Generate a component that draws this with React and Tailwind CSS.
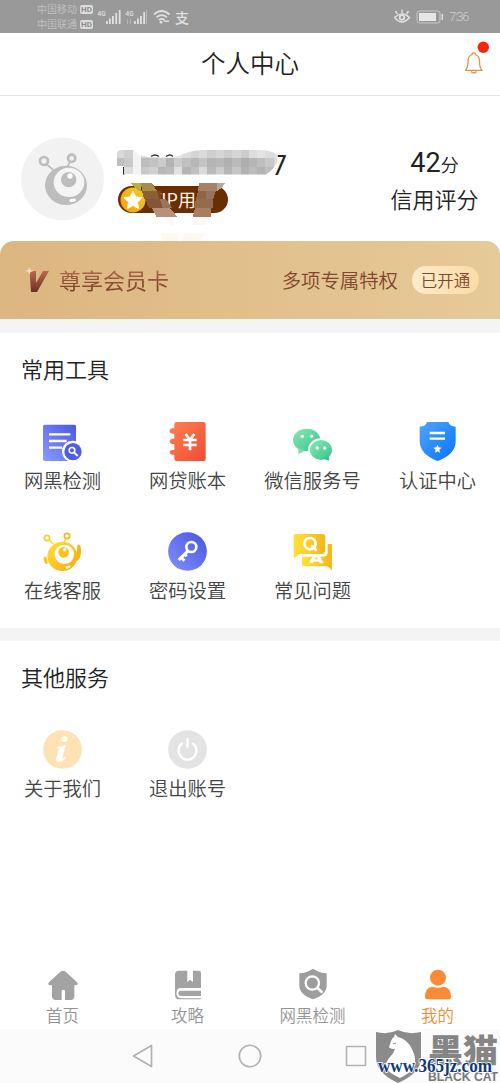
import React from 'react';

const BLOCKS_TOP = ['#d9d9d9', '#cfcfcf', '#f3f3f3', '#d2d2d2', '#e4e4e4', '#e9e9e9', '#ededed', '#e6e6e6', '#dcdcdc', '#d4d4d4', '#dadada', '#cfcfcf', '#d6d6d6', '#cdcdcd', '#d6d6d6', '#cccccc', '#dedede', '#e4e4e4', '#dddddd', '#e2e2e2'];
const BLOCKS_MID = ['#bfbfbf', '#c9c9c9', '#f3f3f3', '#bdbdbd', '#c2c2c2', '#cbcbcb', '#b3b3b3', '#cccccc', '#c0c0c0', '#b7b7b7', '#c4c4c4', '#b5b5b5', '#b9b9b9', '#b0b0b0', '#bababa', '#aeaeae', '#b6b6b6', '#bebebe', '#c8c8c8', '#d8d8d8'];
const BLOCKS_LOW = ['#ffffff', '#dddddd', '#f3f3f3', '#c8c8c8', '#d0d0d0', '#b8b8b8', '#bcbcbc', '#e0e0e0', '#b4b4b4', '#c0c0c0', '#dadada', '#bababa', '#cccccc', '#b6b6b6', '#c6c6c6', '#b2b2b2', '#bcbcbc', '#b4b4b4', '#bfbfbf', '#e0e0e0'];

function StatusBar() {
  return (
    <div className="h-[33px] bg-[#999] flex items-center pl-[37px] pr-[32px]">
      <div className="flex flex-col gap-[3px] w-[57px]">
        {['中国移动', '中国联通'].map((name) => (
          <div key={name} className="flex items-center gap-[2px] h-[12px]">
            <span className="text-[10px] leading-none text-[#c2c2c2] w-[41px] whitespace-nowrap">{name}</span>
            <span className="w-[13px] h-[9px] rounded-[2px] bg-[#dcdcdc] text-[#8c8c8c] text-[8px] leading-[9px] font-bold text-center font-['Roboto']">HD</span>
          </div>
        ))}
      </div>
      {/* signal bars and wifi */}
      <svg className="ml-[3px] w-[76px] h-[18px]" viewBox="97 8 76 18" fill="#e0e0e0">
        <text x="97.500" y="16" fontSize="7.500" fontWeight="500" fontFamily="Roboto" textLength="8" lengthAdjust="spacingAndGlyphs">4G</text>
        <text x="125.500" y="16" fontSize="7.500" fontWeight="500" fontFamily="Roboto" textLength="8" lengthAdjust="spacingAndGlyphs">4G</text>
        <path d="M106 21h1.800v3H106zM109 18.500h1.800v5.500h-1.800zM112 16h1.800v8h-1.800zM115.300 13h1.800v11h-1.800zM118.800 10h1.800v14h-1.800z" />
        <path d="M134 21h1.800v3H134zM137 18.500h1.800v5.500h-1.800zM140 16h1.800v8h-1.800zM143.300 12h1.800v12h-1.800z" />
        <path d="M146 10h1v14h-1z" fill="#b8b8b8" />
        <path d="M127 19h1v5h-1zM130 19h1v5h-1z" fill="#b5b5b5" />
        <g fill="none" stroke="#e0e0e0" strokeWidth="1.700">
          <path d="M154 14.500q7.500-7 15.500 0M156.500 17.300q5.200-4.500 10.500 0M159 20q2.800-2.300 5.500 0" />
        </g>
        <circle cx="161" cy="22.200" r="1.400" />
        <path d="M164 20.500h5v1.500h-5z" />
      </svg>
      <span className="ml-[2px] text-[14px] leading-[18px] font-medium text-[#e0e0e0]">支</span>
      <div className="flex-1" />
      <svg className="w-[50px] h-[16px]" viewBox="394 9 50 16" fill="none" stroke="#e0e0e0">
        <path d="M394.500 17.500q7.500-7 15 0q-7.500 9-15 0z" strokeWidth="1.500" />
        <circle cx="402" cy="17.500" r="2.300" strokeWidth="1.800" />
        <path d="M402 13V9.500M397.500 14l-2-3M406.500 14l2-3" strokeWidth="1.400" />
        <rect x="417" y="11" width="23" height="12" rx="2.500" stroke="#c8c8c8" />
        <rect x="419" y="13" width="17" height="8" fill="#e6e6e6" stroke="none" />
        <path d="M442.300 14v6" strokeWidth="1.500" />
      </svg>
      <span className="ml-[5px] w-[19px] text-[13px] font-light tracking-[-1.300px] text-[#cfcfcf] font-['Roboto'] whitespace-nowrap">7:36</span>
    </div>
  );
}

function Header() {
  return (
    <div className="relative h-[63px] border-b border-[#e2e2e2] flex items-center justify-center">
      <h1 className="-mt-[2px] text-[24.500px] leading-none text-[#222]">个人中心</h1>
      <svg className="absolute left-[464px] top-[7px] w-[27px] h-[36px]" viewBox="464 40 27 36">
        <path d="M465.500 70.300c2.300-2.300 2.500-4 2.500-9 0-4 2.200-6 4-6.800 0-2.200 3.500-2.200 3.500 0 1.800.8 4 2.800 4 6.800 0 5 .2 6.700 2.500 9z" fill="none" stroke="#d9944a" strokeWidth="1.300" strokeLinejoin="round" />
        <path d="M471 71.500q2.700 3 5.500 0" fill="none" stroke="#d9944a" strokeWidth="1.300" />
        <circle cx="483.300" cy="47.200" r="5.700" fill="#f5260f" />
      </svg>
    </div>
  );
}

function Mosaic() {
  return (
    <svg className="absolute left-[115px] top-[49px] w-[175px] h-[102px]" viewBox="115 145 175 102">
      <defs>
        <clipPath id="smear">
          <path d="M117 153q1-3 4-3h11q3 0 6 4 3 3 12 3h22q8-1 14-4 8-3 20-3h56q16 2 16 6-1 12-12 18.500H134V174h-10v-8h-7z" />
        </clipPath>
      </defs>
      <path d="M123 167h1.500v7.500H123z" fill="#222" />
      <g clipPath="url(#smear)" shapeRendering="crispEdges">
        {[BLOCKS_TOP, BLOCKS_MID, BLOCKS_LOW].map((row, r) =>
          row.map((fill, c) => (
            <rect key={r + '-' + c} x={116 + c * 8.3} y={149.5 + r * 8.5} width="8.500" height="8.600" fill={fill} />
          ))
        )}
      </g>
      <path d="M151 156.500q4-3 8 0M166 156.500q4-3 7 0" fill="none" stroke="#333" strokeWidth="1.300" />
      {/* smears across the badge */}
      <g shapeRendering="crispEdges">
        <path d="M131 183h10v8h-3z" fill="#b8ae45" />
        <path d="M141 183h11l5 8h-15z" fill="#a98a4c" />
        <path d="M142 191h15l3 8h-16z" fill="#8b6034" />
        <path d="M145 199h17l3 9h-16z" fill="#835637" />
        <path d="M152 208h18l7 8.500h-21z" fill="#b69078" />
        <path d="M157 191h4v8h-2z" fill="#7a4720" />
        <path d="M160 199h6l6 9h-9z" fill="#9b7458" />
        <path d="M199 183h18v8h-19z" fill="#a68269" />
        <path d="M217 183h8l-3 5-5 3z" fill="#baa797" />
        <path d="M198 191h8v8h-10z" fill="#8e6549" />
        <path d="M206 191h10l-3 8h-7z" fill="#99745c" />
        <path d="M196 199h17v9h-19z" fill="#956b4e" />
        <path d="M195 208h16v8.500h-18z" fill="#a87d63" />
        <path d="M166 217h8v8h-3zM195 217h15l-4 8h-14z" fill="#faf8f6" />
        <path d="M162 233h16v8h-16zM183 233h22l-5 8h-17z" fill="#fdf8f1" />
      </g>
    </svg>
  );
}

function Profile() {
  return (
    <div className="relative h-[145px] pl-[21px] pr-[21px] flex">
      <svg className="mt-[41px] w-[83px] h-[84px] shrink-0" viewBox="0 0 249 252">
        <circle cx="124.500" cy="126" r="124.500" fill="#f2f2f2" />
        <g fill="none" stroke="#bdbdbd">
          <circle cx="69" cy="72" r="12" strokeWidth="8" />
          <circle cx="152" cy="64" r="11" strokeWidth="8" />
          <path d="M77 82l20 17M147 75l-9 16" strokeWidth="5" />
        </g>
        <ellipse cx="135" cy="145" rx="63" ry="59" fill="#bdbdbd" />
        <ellipse cx="144" cy="136" rx="46" ry="44" fill="#f5f5f5" />
        <circle cx="143" cy="128" r="23" fill="#bdbdbd" />
        <circle cx="147" cy="117" r="8" fill="#fff" />
        <ellipse cx="155" cy="190" rx="10" ry="5" fill="#fff" transform="rotate(-8 155 190)" />
      </svg>
      <div className="ml-[14px] pt-[54px] w-[173px]">
        <div className="h-[32px] text-right text-[27px] leading-[32px] font-normal text-[#222] font-['Roboto'] pr-[4px]">7</div>
        <div className="mt-[4px] w-[110px] h-[27px] rounded-full bg-[#692f02] flex items-center">
          <svg className="ml-[2px] w-[26px] h-[26px]" viewBox="0 0 26 26">
            <defs>
              <linearGradient id="coin" x1="1" y1="0" x2="0" y2="1">
                <stop offset="0" stopColor="#f3cf24" />
                <stop offset="1" stopColor="#f79b0b" />
              </linearGradient>
            </defs>
            <circle cx="13" cy="13" r="12.500" fill="url(#coin)" />
            <path d="M13 4l2.800 5.900 6.400.8-4.700 4.500 1.200 6.500L13 18.500l-5.700 3.200 1.200-6.500-4.700-4.500 6.400-.8z" fill="#fffdf0" stroke="#fffdf0" strokeLinejoin="round" />
          </svg>
          <span className="-mt-[2px] ml-[5px] text-[18px] leading-none font-normal text-[#fff5e8]">VIP用</span>
        </div>
      </div>
      <div className="ml-auto pt-[50px] w-[89px] text-[#222] text-center">
        <div className="h-[34px] leading-[34px] whitespace-nowrap">
          <span className="text-[27px] font-normal font-['Roboto']">42</span>
          <span className="text-[18px]">分</span>
        </div>
        <div className="mt-[7px] text-[22px] leading-[22px] whitespace-nowrap">信用评分</div>
      </div>
      <Mosaic />
    </div>
  );
}

function MemberCard() {
  return (
    <div className="h-[78px] rounded-t-[14px] bg-linear-to-r from-[#dcb680] to-[#e6ca98] flex items-center pl-[25px] pr-[21px] text-[#80472f]">
      <svg className="w-[25px] h-[26px]" viewBox="25 266 25 26">
        <defs>
          <linearGradient id="vee" x1="0" y1="0" x2="0" y2="1">
            <stop offset="0" stopColor="#b56a50" />
            <stop offset="1" stopColor="#6f2f25" />
          </linearGradient>
        </defs>
        <path d="M29.500 270h6.500v12l7-12h6l-12 21h-6z" fill="url(#vee)" />
        <path d="M25 270l3-1 1.500-3 1 3 3 1-3 1-1 3-1-3z" fill="#f6ddc4" />
      </svg>
      <span className="-mt-[2px] ml-[9px] text-[22px] leading-[32px] font-normal bg-linear-to-b from-[#b87255] to-[#743a25] bg-clip-text text-transparent">尊享会员卡</span>
      <span className="-mt-[1px] ml-auto text-[19.400px] leading-none">多项专属特权</span>
      <span className="ml-[14px] w-[67px] h-[28px] rounded-full bg-linear-to-r from-[#fcebcb] to-[#fbdca6] text-[16.500px] leading-[29px] text-center">已开通</span>
    </div>
  );
}

function ReportIcon() {
  return (
    <svg className="w-[39px] h-[39px]" viewBox="0 0 117 117">
      <defs>
        <linearGradient id="blue" x1="0" y1="1" x2="1" y2="0">
          <stop offset="0" stopColor="#8a9bff" />
          <stop offset="1" stopColor="#4a57e2" />
        </linearGradient>
      </defs>
      <rect y="8" width="99" height="109" rx="5" fill="url(#blue)" />
      <path d="M18 37h64M18 57h53M18 77h39" stroke="#fff" strokeWidth="7" />
      <circle cx="89" cy="88" r="32" fill="#fff" />
      <circle cx="90" cy="89" r="26" fill="#4f5ce4" />
      <circle cx="87" cy="85" r="8.500" fill="none" stroke="#fff" strokeWidth="4.500" />
      <path d="M93 91l11 11" stroke="#fff" strokeWidth="6" />
    </svg>
  );
}

function LedgerIcon() {
  return (
    <svg className="w-[39px] h-[39px]" viewBox="0 0 117 117">
      <defs>
        <linearGradient id="red" x1="0" y1="0" x2="1" y2="1">
          <stop offset="0" stopColor="#ff8150" />
          <stop offset="1" stopColor="#f04a36" />
        </linearGradient>
      </defs>
      <path d="M26 0h80q7 0 7 7v103q0 7-7 7H26q-7 0-7-7v-12h-5q-9 0-9-7t9-7h5V66h-5q-9 0-9-8t9-8h5V35h-5q-9 0-9-8t9-8h5V7q0-7 7-7z" fill="url(#red)" />
      <path d="M53 36l13 18 13-18M66 54v31M46 54h40M46 69h40" fill="none" stroke="#fff" strokeWidth="8" />
    </svg>
  );
}

function WechatIcon() {
  return (
    <svg className="w-[39px] h-[39px]" viewBox="0 0 117 117">
      <defs>
        <linearGradient id="green" x1="0" y1="0" x2="1" y2="1">
          <stop offset="0" stopColor="#8be8b3" />
          <stop offset="1" stopColor="#35c48a" />
        </linearGradient>
      </defs>
      <ellipse cx="41" cy="54" rx="41" ry="34" fill="url(#green)" />
      <path d="M14 76l3 20 18-10z" fill="#7be0ad" />
      <circle cx="28" cy="43" r="5" fill="#fff" />
      <circle cx="56" cy="43" r="5" fill="#fff" />
      <ellipse cx="83" cy="84" rx="38" ry="35" fill="#fff" />
      <ellipse cx="84" cy="84" rx="33" ry="30" fill="url(#green)" />
      <path d="M90 110l19 6-3-17z" fill="#35c48a" />
      <circle cx="73" cy="78" r="5" fill="#fff" />
      <circle cx="95" cy="78" r="5" fill="#fff" />
    </svg>
  );
}

function ShieldIcon() {
  return (
    <svg className="w-[39px] h-[39px]" viewBox="0 0 117 117">
      <defs>
        <linearGradient id="azure" x1="0" y1="0" x2="1" y2="1">
          <stop offset="0" stopColor="#50a5f8" />
          <stop offset="1" stopColor="#0872fb" />
        </linearGradient>
      </defs>
      <path d="M27 0h64q4 14 22 14v43q0 40-54 60Q5 97 5 57V14Q23 14 27 0z" fill="url(#azure)" />
      <path d="M35 33h46M35 50h46" stroke="#fff" strokeWidth="7" />
      <path d="M58.500 68l3.500 8 9 1-7 6 2 9-7.500-4.500L51 92l2-9-7-6 9-1z" fill="#fff" />
    </svg>
  );
}

function RobotIcon() {
  return (
    <svg className="w-[39px] h-[39px]" viewBox="0 0 117 117">
      <defs>
        <linearGradient id="gold" x1="0" y1="0" x2="1" y2="1">
          <stop offset="0" stopColor="#ffe23c" />
          <stop offset="1" stopColor="#f9a910" />
        </linearGradient>
      </defs>
      <g fill="none" stroke="#f7cf2b">
        <circle cx="12" cy="18" r="8" strokeWidth="5" />
        <circle cx="72" cy="12" r="8" strokeWidth="5" stroke="#f5b91d" />
        <path d="M18 24l13 12M69 20l-7 13" strokeWidth="4" />
      </g>
      <ellipse cx="8" cy="85" rx="5" ry="12" fill="#fbc41c" transform="rotate(-15 8 85)" />
      <path d="M104 38q11-2 10 22-2 26-16 28 5-22 5-48z" fill="#f6b416" />
      <ellipse cx="58" cy="73" rx="45" ry="44" fill="url(#gold)" />
      <ellipse cx="64" cy="67" rx="29" ry="29" fill="#fff" />
      <circle cx="62" cy="61" r="16" fill="#fac11b" />
      <circle cx="65" cy="53" r="5" fill="#fff" />
      <ellipse cx="75" cy="105" rx="8" ry="3.500" fill="#fff" transform="rotate(-15 75 105)" />
    </svg>
  );
}

function KeyIcon() {
  return (
    <svg className="w-[39px] h-[39px]" viewBox="0 0 117 117">
      <defs>
        <linearGradient id="indigo" x1="0" y1="1" x2="1" y2="0">
          <stop offset="0" stopColor="#8290ff" />
          <stop offset="1" stopColor="#4755e2" />
        </linearGradient>
      </defs>
      <circle cx="58.500" cy="58.500" r="58" fill="url(#indigo)" />
      <circle cx="70" cy="45" r="15" fill="none" stroke="#fff" strokeWidth="8" />
      <path d="M61 56L32 84M39 75l10 11M50 65l6 8" stroke="#fff" strokeWidth="9" />
    </svg>
  );
}

function FaqIcon() {
  return (
    <svg className="w-[39px] h-[39px]" viewBox="0 0 117 117">
      <defs>
        <linearGradient id="amber" x1="0" y1="0" x2="1" y2="0">
          <stop offset="0" stopColor="#ffe13a" />
          <stop offset="1" stopColor="#f3b81a" />
        </linearGradient>
      </defs>
      <path d="M104 36h13v78L103 103H32q-5 0-5-6V74h64q13 0 13-14z" fill="url(#amber)" />
      <path d="M8 6h80q9 0 9 9v38q0 12-11 13H20L2 79V12q0-6 6-6z" fill="url(#amber)" />
      <circle cx="51" cy="35" r="17" fill="none" stroke="#fff" strokeWidth="8" />
      <path d="M54 40l17 16" stroke="#fff" strokeWidth="8" />
      <path d="M48 94l14-27h16l14 27H81l-3-5H62l-3 5z" fill="#fff" />
      <path d="M70 74l4 8h-8z" fill="#f9c825" />
    </svg>
  );
}

function InfoIcon() {
  return (
    <svg className="w-[39px] h-[39px]" viewBox="0 0 117 117">
      <circle cx="58.500" cy="58.500" r="58" fill="#fde3b4" />
      <circle cx="64" cy="28" r="9" fill="#fff" />
      <path d="M43 51q13 0 24-5l-11 39q1 4 10-4l2 3Q58 96 46 95q-8-2-5-11l8-28q-1-3-7-2z" fill="#fff" stroke="#fff" strokeWidth="2" />
    </svg>
  );
}

function PowerIcon() {
  return (
    <svg className="w-[39px] h-[39px]" viewBox="0 0 117 117">
      <circle cx="58.500" cy="58.500" r="58" fill="#e3e3e3" />
      <path d="M44 39a27 27 0 1 0 29 0M58.500 25v28" fill="none" stroke="#fff" strokeWidth="7" />
    </svg>
  );
}

function Tool({ icon, label }) {
  return (
    <div className="flex flex-col items-center h-[110px]">
      {icon}
      <span className="mt-[7px] text-[19.300px] leading-[24px] text-[#444] whitespace-nowrap">{label}</span>
    </div>
  );
}

function Tab({ icon, label, active }) {
  return (
    <div className="flex flex-col items-center">
      {icon}
      <span className={`text-[16.500px] leading-[20px] ${active ? 'text-[#f78a35]' : 'text-[#949494]'}`}>{label}</span>
    </div>
  );
}

function TabBar() {
  return (
    <div className="grid grid-cols-4 h-[61px]">
      <Tab
        label="首页"
        icon={
          <svg className="w-[30px] h-[37px]" viewBox="0 0 90 111">
            <path d="M37 11q8-6 16 0l34 32q6 8-3 9h-5v33q0 11-11 11H51V70q0-4-3-4h-4q-3 0-3 4v26H24q-12 0-12-11V52H6q-9-1-3-9z" fill="#a3a3a3" />
          </svg>
        }
      />
      <Tab
        label="攻略"
        icon={
          <svg className="w-[30px] h-[37px]" viewBox="0 0 90 111">
            <path d="M18 8h25v34l8-7 9 7V8h17q7 0 7 6v46H23q-12 0-12 14 0 11 10 14h63v6H20Q6 94 6 80V20Q6 8 18 8z" fill="#a3a3a3" />
            <path d="M84 68H24q-8 0-8 8t8 8h60z" fill="#a3a3a3" />
            <path d="M84 64H24q-11 0-11 12t11 12h60" fill="none" stroke="#fff" strokeWidth="5" />
          </svg>
        }
      />
      <Tab
        label="网黑检测"
        icon={
          <svg className="w-[30px] h-[37px]" viewBox="0 0 90 111">
            <path d="M45 2q18 12 41 14v36q0 29-41 42Q4 81 4 52V16Q27 14 45 2z" fill="#9d9d9d" />
            <circle cx="43" cy="45" r="20" fill="none" stroke="#fff" strokeWidth="7" />
            <path d="M56 57l17 17" stroke="#fff" strokeWidth="8" />
          </svg>
        }
      />
      <Tab
        active
        label="我的"
        icon={
          <svg className="w-[30px] h-[37px]" viewBox="0 0 90 111">
            <circle cx="45" cy="29" r="24" fill="#fb8a38" />
            <path d="M6 88q0-30 22-32 17 6 34 0 22 2 22 32 0 6-6 6H12q-6 0-6-6z" fill="#fb8a38" />
          </svg>
        }
      />
    </div>
  );
}

function Watermark() {
  return (
    <div className="absolute left-[374px] bottom-0 w-[126px] h-[54px]">
      <svg className="w-[126px] h-[54px] overflow-visible" viewBox="374 1029 126 54">
        <path d="M398 1030q10 5 23 2v25q0 16-23 26-22-10-22-26v-25q12 3 22-2z" fill="#8b8b8b" />
        <path d="M385 1068q1-7 5-11 4-4 5-8-5 0-6-2 1-3 2-6 1-3 3-4l1-3 3 3q9 2 14 12 5 10 2 19-4 5-14 10-9-4-15-10z" fill="#fff" />
        <path d="M393 1044l3-1" stroke="#8b8b8b" />
        <text x="428" y="1062" fontFamily="Noto Sans CJK SC" fontWeight="900" fontSize="32" textLength="70" lengthAdjust="spacingAndGlyphs" fill="#858585">黑猫</text>
        <text x="428" y="1081" fontFamily="Liberation Sans" fontWeight="700" fontSize="12.500" textLength="70" lengthAdjust="spacingAndGlyphs" fill="#777">BLACK CAT</text>
        <text x="378" y="1072" fontFamily="Liberation Serif" fontWeight="700" fontSize="18" textLength="114" lengthAdjust="spacingAndGlyphs" fill="#123a78" stroke="#fff" strokeWidth="1.500" paintOrder="stroke">www.365jz.com</text>
      </svg>
    </div>
  );
}

function SystemNav() {
  return (
    <div className="relative h-[54px] bg-[#fbfbfb]">
      <div className="flex justify-between items-center h-full pl-[132px] pr-[133px]">
        <svg className="w-[22px] h-[24px]" viewBox="0 0 22 24" fill="none" stroke="#b2b2b2" strokeWidth="1.700" strokeLinejoin="round">
          <path d="M19.500 1.500v21L1.500 12z" />
        </svg>
        <svg className="w-[24px] h-[24px]" viewBox="0 0 24 24" fill="none" stroke="#b2b2b2" strokeWidth="1.600">
          <circle cx="12" cy="12" r="10.700" />
        </svg>
        <svg className="w-[22px] h-[22px]" viewBox="0 0 22 22" fill="none" stroke="#b2b2b2" strokeWidth="1.600">
          <rect x="1.500" y="1.500" width="19" height="19" rx="0.500" />
        </svg>
      </div>
      <Watermark />
    </div>
  );
}

export default function App() {
  return (
    <div className="w-[500px] h-[1083px] bg-white overflow-hidden flex flex-col font-[350] font-['Noto_Sans_CJK_SC',sans-serif]">
      <StatusBar />
      <Header />
      <Profile />
      <MemberCard />
      <div className="h-[14px] bg-[#f4f4f4]" />
      <section className="h-[295px]">
        <h2 className="pt-[23px] pl-[21px] text-[22px] leading-[24px] text-[#222]">常用工具</h2>
        <div className="mt-[42px] grid grid-cols-4">
          <Tool icon={<ReportIcon />} label="网黑检测" />
          <Tool icon={<LedgerIcon />} label="网贷账本" />
          <Tool icon={<WechatIcon />} label="微信服务号" />
          <Tool icon={<ShieldIcon />} label="认证中心" />
          <Tool icon={<RobotIcon />} label="在线客服" />
          <Tool icon={<KeyIcon />} label="密码设置" />
          <Tool icon={<FaqIcon />} label="常见问题" />
        </div>
      </section>
      <div className="h-[13px] bg-[#f4f4f4]" />
      <section className="flex-1">
        <h2 className="pt-[23px] pl-[21px] text-[22px] leading-[24px] text-[#222]">其他服务</h2>
        <div className="mt-[42px] grid grid-cols-4">
          <Tool icon={<InfoIcon />} label="关于我们" />
          <Tool icon={<PowerIcon />} label="退出账号" />
        </div>
      </section>
      <TabBar />
      <SystemNav />
    </div>
  );
}
